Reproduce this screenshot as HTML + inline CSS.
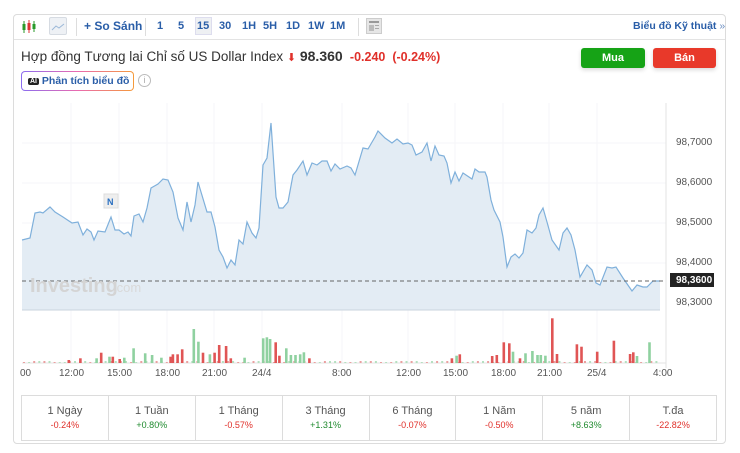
<!DOCTYPE html>
<html><head><meta charset="utf-8"><style>
*{margin:0;padding:0;box-sizing:border-box}
body{width:740px;height:453px;background:#fff;font-family:"Liberation Sans",sans-serif;position:relative;overflow:hidden}
.card{position:absolute;left:13px;top:14px;width:713px;height:430px;border:1px solid #dcdcdc;border-radius:4px}
.tb{position:absolute;left:0;top:0;width:100%;height:25px;border-bottom:1px solid #e3e3e3}
.a{position:absolute;font-size:11px;font-weight:bold;color:#2a5ea8;top:12px;line-height:1;white-space:nowrap}
.sep{position:absolute;top:4px;width:1px;height:18px;background:#ddd}
.abs{position:absolute}
.btn{position:absolute;top:48px;height:20px;border-radius:3px;color:#fff;font-size:11px;font-weight:bold;text-align:center;line-height:20px;box-shadow:0 2px 4px rgba(0,0,0,.15)}
table{position:absolute;left:21px;top:395px;width:696px;border-collapse:collapse;table-layout:fixed}
td{border:1px solid #dcdcdc;text-align:center;height:45px;font-size:11px;color:#555;vertical-align:top;padding-top:9px}
td div{font-size:9px;margin-top:3px}
.r{color:#e0302a}.g{color:#1f8a2e}
.tl{position:absolute;top:368px;font-size:10px;color:#555}
.yl{position:absolute;left:676px;font-size:10px;color:#555}
</style></head><body>
<div class="card">
 <div class="tb"></div>
</div>
<svg class="abs" style="left:21px;top:19px" width="16" height="16"><line x1="3" y1="2" x2="3" y2="14" stroke="#2a9a2a"/><rect x="1.5" y="5" width="3" height="6" fill="#2a9a2a"/><line x1="8" y1="1" x2="8" y2="14" stroke="#d33"/><rect x="6.5" y="4" width="3" height="7" fill="#d33"/><line x1="13" y1="2" x2="13" y2="13" stroke="#2a9a2a"/><rect x="11.5" y="5" width="3" height="5" fill="#2a9a2a"/></svg>
<div class="abs" style="left:49px;top:17px;width:18px;height:18px;background:#eef1f5;border:1px solid #d6dbe2;border-radius:2px"><svg width="16" height="16"><polyline points="2,12 6,8 9,10 14,6" fill="none" stroke="#9bb8d8" stroke-width="1"/></svg></div>
<div class="sep" style="left:76px;top:18px"></div>
<div class="a" style="left:84px;top:20px;font-size:12px">+ So Sánh</div>
<div class="sep" style="left:145px;top:18px"></div>
<div class="a" style="left:157px;top:21px">1</div>
<div class="a" style="left:178px;top:21px">5</div>
<div class="abs" style="left:195px;top:17px;width:17px;height:18px;background:#eef0f3;border:1px solid #dde"></div>
<div class="a" style="left:197px;top:21px">15</div>
<div class="a" style="left:219px;top:21px">30</div>
<div class="a" style="left:242px;top:21px">1H</div>
<div class="a" style="left:263px;top:21px">5H</div>
<div class="a" style="left:286px;top:21px">1D</div>
<div class="a" style="left:308px;top:21px">1W</div>
<div class="a" style="left:330px;top:21px">1M</div>
<div class="sep" style="left:358px;top:18px"></div>
<svg class="abs" style="left:366px;top:18px" width="16" height="16"><rect x="0.5" y="0.5" width="15" height="15" fill="#e6e6e6" stroke="#ccc"/><rect x="3" y="3" width="10" height="2" fill="#999"/><rect x="3" y="7" width="5" height="6" fill="#bbb"/><rect x="9" y="7" width="4" height="1" fill="#aaa"/><rect x="9" y="10" width="4" height="1" fill="#aaa"/></svg>
<div class="a" style="left:633px;top:21px;font-size:10.5px">Biểu đồ Kỹ thuật <span style="font-weight:normal;color:#6a8cc0">»</span></div>
<div class="abs" style="left:21px;top:48px;font-size:13.5px;color:#333">Hợp đồng Tương lai Chỉ số US Dollar Index <span style="color:#e0302a;font-size:11px">&#x2B07;</span> <b style="font-size:14px">98.360</b> <span style="color:#e0302a;font-size:12.5px;font-weight:bold">&nbsp;-0.240 &nbsp;(-0.24%)</span></div>
<div class="btn" style="left:581px;width:64px;background:#16a316">Mua</div>
<div class="btn" style="left:653px;width:63px;background:#e8392a">Bán</div>
<div class="abs" style="left:21px;top:71px;width:113px;height:20px;border-radius:4px;padding:1px;background:linear-gradient(90deg,#8a6cf0,#e96bb0,#f59a3a)"><div style="background:#fff;height:100%;border-radius:3px;font-size:10.5px;font-weight:bold;color:#2a5ea8;line-height:18px;padding-left:6px"><span style="background:#222;color:#fff;font-size:7px;padding:0 2px;border-radius:2px;vertical-align:1px">AI</span> Phân tích biểu đồ</div></div>
<div class="abs" style="left:138px;top:74px;width:13px;height:13px;border:1px solid #bbb;border-radius:50%;font-size:9px;color:#aaa;text-align:center;line-height:11px">i</div>
<svg class="abs" style="left:0;top:0" width="740" height="453">
<g stroke="#f5f6f8" stroke-width="1">
<line x1="22" y1="143" x2="666" y2="143"/><line x1="22" y1="183" x2="666" y2="183"/><line x1="22" y1="223" x2="666" y2="223"/><line x1="22" y1="263" x2="666" y2="263"/>
<line x1="71" y1="103" x2="71" y2="363"/><line x1="119" y1="103" x2="119" y2="363"/><line x1="167" y1="103" x2="167" y2="363"/><line x1="214" y1="103" x2="214" y2="363"/><line x1="262" y1="103" x2="262" y2="363"/><line x1="342" y1="103" x2="342" y2="363"/><line x1="408" y1="103" x2="408" y2="363"/><line x1="455" y1="103" x2="455" y2="363"/><line x1="503" y1="103" x2="503" y2="363"/><line x1="549" y1="103" x2="549" y2="363"/><line x1="597" y1="103" x2="597" y2="363"/>
</g>
<line x1="666" y1="103" x2="666" y2="368" stroke="#e3e3e3"/>
<polygon fill="#e3ecf4" stroke="none" points="22,310 22,240 30,238 35,213 40,212 43,213 50,207 55,212 63,217 72,223 78,222 83,235 87,229 91,232 94,240 98,231 105,232 111,217 115,230 119,230 124,234 128,232 131,236 134,216 139,214 143,222 147,208 151,188 158,184 163,179 168,180 173,192 178,218 183,230 187,202 191,222 195,205 198,182 207,212 211,212 215,227 219,250 223,257 227,268 231,260 235,265 239,240 243,244 247,222 252,233 256,238 259,228 263,165 267,158 271,123 276,197 279,208 283,208 288,202 293,175 297,170 303,161 307,175 312,163 317,165 322,161 327,161 331,171 335,164 340,169 347,166 351,168 355,175 363,148 368,149 375,137 378,131 385,138 392,143 397,139 403,144 408,143 412,145 416,155 422,152 427,143 431,161 435,146 439,155 444,156 447,163 451,183 455,172 459,181 463,173 472,179 475,169 479,172 485,172 487,177 491,200 494,210 500,222 503,237 507,267 511,257 515,254 519,258 523,253 527,230 532,233 536,228 539,215 543,208 547,222 552,240 559,250 563,233 567,228 571,235 575,250 580,277 587,265 592,270 596,283 600,285 607,267 612,268 616,267 623,278 632,291 637,285 643,287 647,287 653,281 660,281 660,310"/>
<polyline fill="none" stroke="#7fb0db" stroke-width="1.2" points="22,240 30,238 35,213 40,212 43,213 50,207 55,212 63,217 72,223 78,222 83,235 87,229 91,232 94,240 98,231 105,232 111,217 115,230 119,230 124,234 128,232 131,236 134,216 139,214 143,222 147,208 151,188 158,184 163,179 168,180 173,192 178,218 183,230 187,202 191,222 195,205 198,182 207,212 211,212 215,227 219,250 223,257 227,268 231,260 235,265 239,240 243,244 247,222 252,233 256,238 259,228 263,165 267,158 271,123 276,197 279,208 283,208 288,202 293,175 297,170 303,161 307,175 312,163 317,165 322,161 327,161 331,171 335,164 340,169 347,166 351,168 355,175 363,148 368,149 375,137 378,131 385,138 392,143 397,139 403,144 408,143 412,145 416,155 422,152 427,143 431,161 435,146 439,155 444,156 447,163 451,183 455,172 459,181 463,173 472,179 475,169 479,172 485,172 487,177 491,200 494,210 500,222 503,237 507,267 511,257 515,254 519,258 523,253 527,230 532,233 536,228 539,215 543,208 547,222 552,240 559,250 563,233 567,228 571,235 575,250 580,277 587,265 592,270 596,283 600,285 607,267 612,268 616,267 623,278 632,291 637,285 643,287 647,287 653,281 660,281"/>
<line x1="22" y1="310" x2="660" y2="310" stroke="#c9d3de"/>
<line x1="22" y1="281" x2="666" y2="281" stroke="#666" stroke-dasharray="4,3"/>
<text x="30" y="292" font-family="Liberation Sans" font-size="20" font-weight="bold" fill="#d4d4d4">Investing</text><text x="113" y="292" font-family="Liberation Sans" font-size="13" fill="#d9d9d9">.com</text>
<rect x="104" y="194" width="14" height="14" fill="#eee" stroke="#ddd"/><text x="107" y="205" font-family="Liberation Sans" font-size="9" font-weight="bold" fill="#2a6fc0">N</text>
<line x1="22" y1="363" x2="666" y2="363" stroke="#e3e3e3"/>
<g id="vol"></g>
<rect x="670" y="273" width="44" height="14" fill="#222"/>
</svg>
<div class="yl" style="top:137px">98,7000</div>
<div class="yl" style="top:177px">98,6000</div>
<div class="yl" style="top:217px">98,5000</div>
<div class="yl" style="top:257px">98,4000</div>
<div class="yl" style="top:275px;color:#fff;font-weight:bold">98,3600</div>
<div class="yl" style="top:297px">98,3000</div>
<div class="tl" style="left:20px">00</div>
<div class="tl" style="left:59px">12:00</div>
<div class="tl" style="left:107px">15:00</div>
<div class="tl" style="left:155px">18:00</div>
<div class="tl" style="left:202px">21:00</div>
<div class="tl" style="left:252px">24/4</div>
<div class="tl" style="left:332px">8:00</div>
<div class="tl" style="left:396px">12:00</div>
<div class="tl" style="left:443px">15:00</div>
<div class="tl" style="left:491px">18:00</div>
<div class="tl" style="left:537px">21:00</div>
<div class="tl" style="left:587px">25/4</div>
<div class="tl" style="left:653px">4:00</div>
<table><tr>
<td>1 Ngày<div class="r">-0.24%</div></td>
<td>1 Tuần<div class="g">+0.80%</div></td>
<td>1 Tháng<div class="r">-0.57%</div></td>
<td>3 Tháng<div class="g">+1.31%</div></td>
<td>6 Tháng<div class="r">-0.07%</div></td>
<td>1 Năm<div class="r">-0.50%</div></td>
<td>5 năm<div class="g">+8.63%</div></td>
<td>T.đa<div class="r">-22.82%</div></td>
</tr></table>
<script>
var big=[["g",390,72],["g",400,110],["r",365,133],["r",355,148],["r",345,148],["r",340,155],["g",260,130],["r",190,143],["r",215,155],["g",208,155],["g",285,145],["g",300,150],["r",445,120],["r",460,123],["r",435,143],["g",425,148],["r",410,143],["g",540,100],["g",548,97],["g",555,102],["r",567,112],["r",575,152],["g",590,130],["g",600,150],["g",610,150],["g",620,148],["g",628,142],["r",640,160],["r",1165,40],["r",1060,112],["r",1072,115],["g",1080,140],["r",1095,160],["g",1107,145],["g",1122,138],["g",1133,150],["g",1140,150],["g",1150,152],["r",1175,147],["r",1218,118],["r",1228,125],["r",1298,107],["r",1262,140],["r",1333,147],["r",1340,142],["g",1348,153],["g",1375,112],["r",1045,150],["r",1035,153],["r",965,148],["g",958,152],["r",948,160],["g",180,160],["r",145,160],["r",120,165],["g",240,158],["r",230,162],["g",320,158],["r",470,160],["g",500,158]];
var s="";
for(var x=23;x<660;x+=5.1){var h=((x*7)%5>2?2:1);var c=((x*13)%7>3.5)?"#eaa0a0":"#b5e0c0";s+='<rect x="'+x.toFixed(1)+'" y="'+(363-h)+'" width="2" height="'+h+'" fill="'+c+'"/>';}
big.forEach(function(b){var x=12+b[1]*0.4627,y=305+b[2]/3;s+='<rect x="'+x.toFixed(1)+'" y="'+y.toFixed(1)+'" width="2.6" height="'+(363-y).toFixed(1)+'" fill="'+(b[0]=="g"?"#8fd1a0":"#e05555")+'"/>';});
document.getElementById("vol").innerHTML=s;
</script>
</body></html>
